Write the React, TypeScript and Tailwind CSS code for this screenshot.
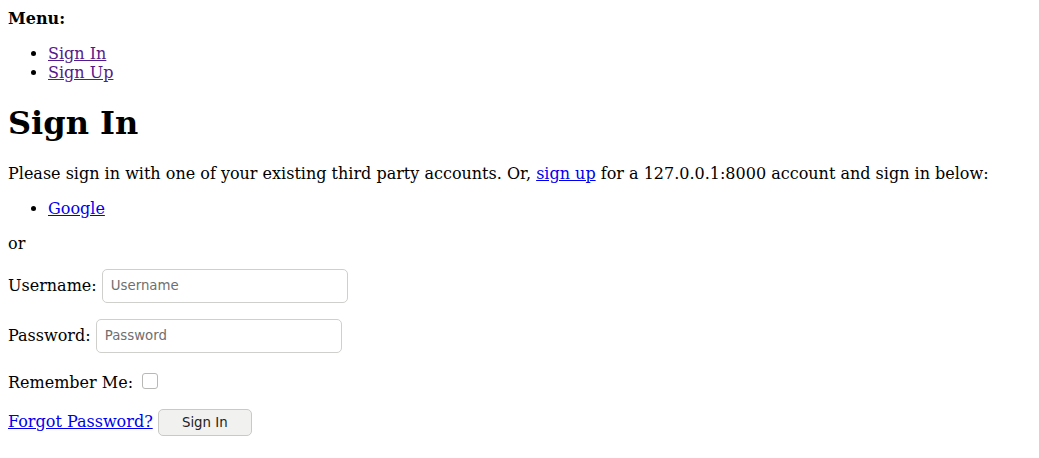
import React from 'react'

const inputCls =
    "inline-block align-baseline h-[34px] w-[246px] px-[8px] rounded-[5px] border border-[#cfcfcc] bg-white font-['DejaVu_Sans',sans-serif] text-[13.33px] text-[#222] placeholder:text-[#6f6f6f] outline-none"

export default function App() {
    return (
        <div className="min-h-screen bg-white px-2 pt-[9px] pb-2 font-['DejaVu_Serif',serif] text-base leading-[normal] text-black">
            <strong className="font-bold">Menu:</strong>
            <ul className="my-4 list-disc pl-10">
                <li><a href="#" className="text-[#551a8b] underline">Sign In</a></li>
                <li><a href="#" className="text-[#551a8b] underline">Sign Up</a></li>
            </ul>

            <h1 className="mt-[22.44px] mb-[21.44px] text-[32px] font-bold">Sign In</h1>

            <p className="my-4">
                Please sign in with one of your existing third party accounts. Or,{' '}
                <a href="#" className="text-[#0000ee] underline">sign up</a> for a 127.0.0.1:8000 account and sign in below:
            </p>

            <ul className="mt-4 mb-[15px] list-disc pl-10">
                <li><a href="#" className="text-[#0000ee] underline">Google</a></li>
            </ul>

            <p className="my-4">or</p>

            <form>
                <p className="my-4">
                    <label htmlFor="id_login">Username:</label>{' '}
                    <input id="id_login" type="text" placeholder="Username" className={inputCls} />
                </p>
                <p className="my-4">
                    <label htmlFor="id_password">Password:</label>{' '}
                    <input id="id_password" type="password" placeholder="Password" className={inputCls} />
                </p>
                <p className="my-4">
                    <label htmlFor="id_remember">Remember Me:</label>{' '}
                    <input
                        id="id_remember"
                        type="checkbox"
                        className="inline-block appearance-none align-[-5px] h-4 w-4 mt-[4px] mb-[4px] ml-[4px] mr-[3px] rounded-[3px] border border-[#b8b8b4] bg-white"
                    />
                </p>
                <a href="#" className="text-[#0000ee] underline">Forgot Password?</a>{' '}
                <button
                    type="submit"
                    className="inline-block align-baseline h-[27px] w-[94px] rounded-[5px] border border-[#c9c9c6] bg-[#f1f1f0] font-['DejaVu_Sans',sans-serif] text-[13.33px] text-[#222]"
                >
                    Sign In
                </button>
            </form>
        </div>
    )
}
